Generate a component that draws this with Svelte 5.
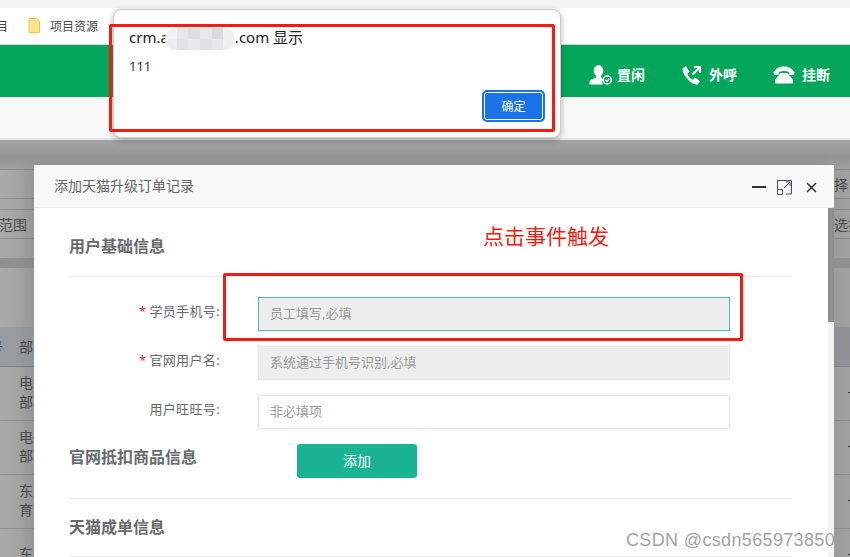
<script>
  const mosaic = ['#f0f1f1','#e6e7e8','#dcdee0','#e6e7e8','#d9dbde','#eeeff0',
                  '#eceded','#e2e3e4','#e7e8e9','#e1e2e3','#e6e7e8','#eff0f0'];
  const rows = [['电子','部'],['电子','部'],['东星','育'],['东星','']];
  const fields = [
    { label: '学员手机号:', req: true, ph: '员工填写,必填', kind: 'focus' },
    { label: '官网用户名:', req: true, ph: '系统通过手机号识别,必填', kind: 'off' },
    { label: '用户旺旺号:', req: false, ph: '非必填项', kind: '' }
  ];
</script>

<div class="page">
  <div class="tabs"></div>
  <div class="bookmarks">
    <span class="bm-cut">目</span>
    <svg class="folder" viewBox="0 0 12 15" width="12" height="15">
      <path d="M1 .500h7.500L11.500 3v11.500H1z" fill="#fde68d" stroke="#f0c63c" />
    </svg>
    <span class="bm-name">项目资源</span>
  </div>
  <div class="green">
    <div class="tool first-tool">
      <svg viewBox="0 0 23 20" width="23" height="20">
        <ellipse cx="9.500" cy="5.800" rx="4.800" ry="5.800" fill="#fff" />
        <path d="M7.300 10h4.400l.800 2.800 1.800 1.200a5.500 5.500 0 0 0-.400 5.500H.500v-2.300c0-1.600 1-2.600 3-3.200l3.300-1.300z" fill="#fff" />
        <circle cx="18.300" cy="15" r="4" fill="none" stroke="#fff" stroke-width="1.500" />
        <path d="M16.500 15l1.400 1.400 2.300-2.600" fill="none" stroke="#fff" stroke-width="1.400" />
      </svg>
      <b>置闲</b>
    </div>
    <div class="tool">
      <svg viewBox="0 0 22 20" width="22" height="20">
        <path d="M.500 3.500 3.800 1 7.500 6.800 5.300 8.800c.800 2.500 2.800 5 5.500 6l2.200-2.300 5 3.700-2.500 3.500C9.500 20 .500 11 .500 3.500z" fill="#fff" />
        <path d="M10.500 9.500l6.500-6.500M12 2h6v6" fill="none" stroke="#fff" stroke-width="2.200" />
      </svg>
      <b>外呼</b>
    </div>
    <div class="tool">
      <svg viewBox="0 0 24 18" width="24" height="18">
        <path d="M.500 6.500C3 2 7 .500 11 .500s8 1.500 10.500 6L21 9h-4.500l-.500-3c-3-1.200-7-1.200-10 0l-.500 3H1z" fill="#fff" />
        <path d="M7.500 7h7L20 14v3.500H2V14z" fill="#fff" />
      </svg>
      <b>挂断</b>
    </div>
  </div>
  <div class="sub"></div>

  <div class="backdrop">
    <div class="band"></div>
    <div class="bg-row h29 far"><span>选择</span></div>
    <div class="bg-row h11"></div>
    <div class="bg-row h29 spread"><span class="range">范围</span><span class="pick2">选择</span></div>
    <div class="gap19"></div>
    <div class="dark"></div>
    <div class="gap59"></div>
    <div class="thead"><span class="th1">号</span><span class="th2">部门</span></div>
    {#each rows as r}
      <div class="trow">
        <div class="cell"><span>{r[0]}</span><span>{r[1]}</span></div>
        <i class="dash"></i>
      </div>
    {/each}
  </div>

  <section class="modal">
    <header class="m-head">
      <span class="m-title">添加天猫升级订单记录</span>
      <div class="m-icons">
        <i class="min"></i>
        <svg viewBox="0 0 15 15" width="15" height="15" class="max">
          <path d="M5 .500h9.500V14H9M.500 9.500V.500H5M.500 9.500v5H5.500v-5zM7 8l6-6M9 2h4v4" fill="none" stroke="#4d4f55" />
        </svg>
        <svg viewBox="0 0 11 11" width="11" height="11">
          <path d="M1 1l9 9M10 1l-9 9" stroke="#2f3138" stroke-width="1.500" fill="none" />
        </svg>
      </div>
    </header>
    <div class="m-wrap">
      <div class="m-body">
        <h3 class="sec first">用户基础信息</h3>
        <hr />
        <div class="form">
          {#each fields as f}
            <div class="field">
              <span class="lab">{#if f.req}<em>*</em>{/if}{f.label}</span>
              <div class="input {f.kind}"><span>{f.ph}</span></div>
            </div>
          {/each}
        </div>
        <div class="sec-row">
          <h3 class="sec">官网抵扣商品信息</h3>
          <button class="add">添加</button>
        </div>
        <hr />
        <h3 class="sec third">天猫成单信息</h3>
        <hr />
      </div>
      <div class="scroll"><div class="thumb"></div></div>
    </div>
  </section>

  <div class="alert">
    <div class="a-title">crm.a<span class="blur">{#each mosaic as c}<i style:background={c}></i>{/each}</span>.com 显示</div>
    <div class="a-msg">111</div>
    <div class="a-foot"><button class="ok">确定</button></div>
  </div>

  <div class="mark one"></div>
  <div class="mark two"></div>
  <div class="note">点击事件触发</div>
  <div class="wm">CSDN @csdn565973850</div>
</div>

<style>
  :global(body) { margin: 0; }
  .page {
    position: relative; width: 850px; height: 557px; overflow: hidden;
    font-family: "Noto Sans", "Noto Sans CJK SC", sans-serif; background: #a3a3a3;
    display: flex; flex-direction: column;
  }
  .tabs { height: 8px; background: #f1f3f4; flex: none; }
  .bookmarks {
    height: 35px; padding-bottom: 1px; background: #fff; border-bottom: 1px solid #d5d5d5; flex: none;
    display: flex; align-items: center; font-size: 12px; color: #444;
  }
  .bm-cut { width: 28px; margin-left: -4px; flex: none; }
  .folder { flex: none; margin-right: 10px; margin-left: 4px; }
  .bm-name { color: #4a4a4a; }
  .green {
    height: 44px; padding: 8px 20px 0 0; background: #03a65a; flex: none;
    display: flex; justify-content: flex-end; align-items: center; gap: 36px;
  }
  .tool { display: flex; align-items: center; gap: 5px; color: #fff; font-size: 14px; }
  .first-tool { margin-right: 1px; }
  .tool b { font-weight: 700; padding-bottom: 2px; }
  .tool svg { flex: none; }
  .sub { height: 41px; background: #f8f8f9; border-bottom: 2px solid #e4e4e4; flex: none; }

  .backdrop {
    flex: 1; color: #4b4b4b; font-size: 14px; min-height: 0;
    background: linear-gradient(90deg, #ababab 0, #9c9c9c 40px, #9c9c9c 820px, #a0a0a0 100%);
  }
  .band { height: 30px; border-bottom: 1px solid #8d8d8d; box-sizing: border-box;
    background: linear-gradient(180deg, #a5a5a5, #939393 60%, #a0a0a0); }
  .bg-row { border-bottom: 1px solid #8a8a8a; box-sizing: border-box; display: flex; align-items: center; white-space: nowrap; }
  .h29 { height: 29px; padding-bottom: 1px; }
  .h11 { height: 11px; }
  .far { padding-left: 820px; }
  .spread { justify-content: space-between; }
  .range { margin-left: -1px; }
  .pick2 { margin-right: -12px; }
  .gap19 { height: 19px; }
  .dark { height: 10px; background: #909090; }
  .gap59 { height: 59px; }
  .thead { height: 40px; padding-bottom: 2px; background: linear-gradient(90deg, #979ca1, #8e9297); border-bottom: 1px solid #808080;
    box-sizing: border-box; display: flex; align-items: center; white-space: nowrap; }
  .th1 { margin-left: -11px; width: 30px; }
  .trow { height: 54px; padding-bottom: 3px; border-bottom: 1px solid #8d8d8d; box-sizing: border-box;
    display: flex; align-items: center; justify-content: space-between; }
  .cell { display: flex; flex-direction: column; padding-left: 19px; line-height: 19.500px; white-space: nowrap; }
  .dash { width: 2px; height: 1px; background: #333; }

  .modal {
    position: absolute; left: 34px; top: 165px; width: 800px; bottom: 0;
    display: flex; flex-direction: column; box-shadow: -6px 0 14px rgba(0,0,0,.08);
  }
  .m-head {
    height: 40px; padding: 0 17px 2px 20px; background: #f8f8f8; border-bottom: 1px solid #eaeaea; flex: none;
    display: flex; align-items: center; justify-content: space-between;
  }
  .m-title { font-size: 14px; color: #666; }
  .m-icons { display: flex; align-items: center; gap: 11px; padding-top: 4px; }
  .min { width: 14px; height: 2px; background: #2f3138; }
  .max { margin-right: 3px; }
  .m-wrap { flex: 1; display: flex; min-height: 0; }
  .m-body { width: 723px; padding: 0 36px 0 35px; background: #fff; flex: none; }
  .scroll { width: 6px; background: #f3f3f3; flex: none; }
  .thumb { height: 114px; background: #8f8f8f; }
  hr { border: 0; border-top: 1px solid #ececec; margin: 0; }
  .sec { margin: 0; font-size: 16px; font-weight: 700; color: #676a6c; line-height: 22px; }
  .first { padding: 27px 0 19px; }
  .form { padding-top: 20px; display: flex; flex-direction: column; gap: 15px; }
  .field { display: flex; align-items: center; height: 34px; }
  .lab { width: 151px; text-align: right; font-size: 13px; letter-spacing: .35px; color: #676a6c; flex: none; padding-bottom: 7px; white-space: nowrap; }
  .lab em { color: #ed1c50; font-style: normal; margin-right: 3px; }
  .input {
    margin-left: 38px; width: 472px; height: 34px; box-sizing: border-box; border: 1px solid #e5e6e7;
    font-size: 13px; color: #999; padding: 0 11px 3px; display: flex; align-items: center;
  }
  .input.focus { background: #eee; border-color: #4cbfa4; }
  .input.off { background: #eee; }
  .sec-row { display: flex; align-items: flex-start; height: 69px; padding-top: 15px; box-sizing: border-box; }
  .sec-row .sec { width: 228px; padding-top: 2px; }
  .add {
    width: 120px; height: 34px; background: #1ab394; border: 0; border-radius: 3px; color: #fff;
    font: 14px "Noto Sans CJK SC", sans-serif; padding: 0 0 2px;
  }
  .third { padding: 17px 0 18px; }

  .alert {
    position: absolute; left: 113px; top: 9px; width: 448px; height: 129px; box-sizing: border-box;
    background: #fff; border-radius: 8px; border: 1px solid #ccc; box-shadow: 0 2px 6px rgba(0,0,0,.3);
    padding: 14px 15px 15px; display: flex; flex-direction: column; color: #222;
  }
  .a-title { font-size: 15px; line-height: 22px; white-space: nowrap; display: flex; align-items: center; }
  .blur {
    width: 70px; height: 22px; margin: 4px 0 0 -4px; border-radius: 10px; overflow: hidden; flex: none;
    display: grid; grid-template-columns: repeat(6, 1fr); grid-template-rows: 1fr 1fr;
  }
  .a-msg { font-size: 13px; line-height: 18px; margin-top: 7px; color: #333; }
  .a-foot { margin-top: auto; display: flex; justify-content: flex-end; }
  .ok {
    width: 63px; height: 32px; flex: none; box-sizing: border-box; background: #1a73e8; color: #fff;
    border: 2px solid #1a73e8; box-shadow: inset 0 0 0 1px #fff; border-radius: 5px;
    font: 12px "Noto Sans CJK SC", sans-serif; padding: 0 0 1px;
  }

  .mark { position: absolute; border: 3px solid #f81a10; border-radius: 2px; box-sizing: border-box; }
  .mark.one { left: 109px; top: 24px; width: 446px; height: 108px; }
  .mark.two { left: 223px; top: 273px; width: 520px; height: 68px; }
  .note { position: absolute; left: 483px; top: 221px; font-size: 21px; line-height: 30px; color: #f81a10; }
  .wm { position: absolute; left: 626px; top: 527px; font: 18px/26px "Liberation Sans", sans-serif; color: #a3a3a3; letter-spacing: .35px; white-space: nowrap; }
</style>
